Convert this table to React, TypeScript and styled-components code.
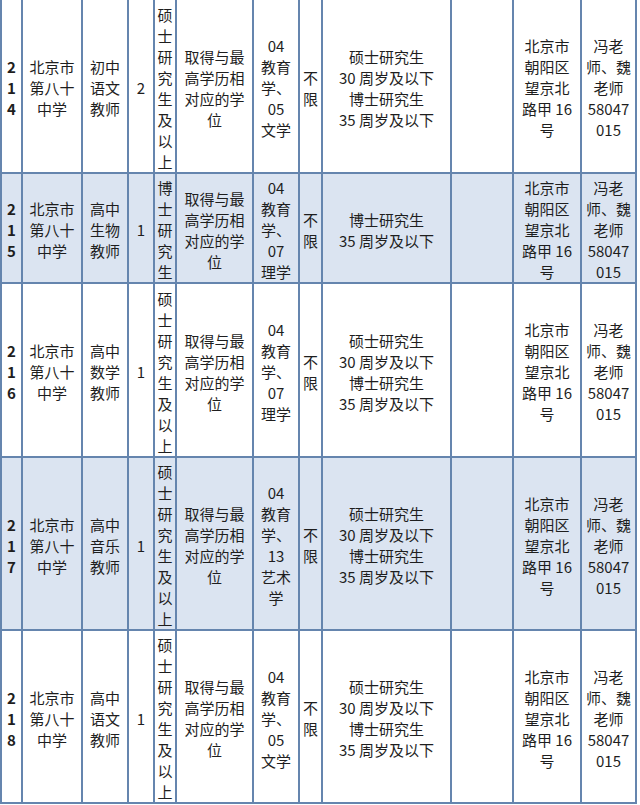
import React from "react";
import styled, { createGlobalStyle } from "styled-components";

const Global = createGlobalStyle`
  html, body { margin: 0; padding: 0; background: #ffffff; }
  body { width: 640px; height: 805px; overflow: hidden; }
`;

const LINE = "#6585ae";
const SHADE = "#dbe4f1";

const Table = styled.table`
  border-collapse: separate;
  border-spacing: 0;
  table-layout: fixed;
  width: 637px;
  border-left: 2px solid ${LINE};
  font-family: "Noto Sans CJK SC", "Noto Sans", sans-serif;
  font-size: 15px;
  line-height: 21px;
  color: #1e1e1e;
`;

const Row = styled.tr<{ $shade: boolean; $h: number }>`
  height: ${(p) => p.$h}px;
  background: ${(p) => (p.$shade ? SHADE : "#ffffff")};
`;

const Cell = styled.td<{ $bold?: boolean }>`
  box-sizing: border-box;
  padding: 3px 0 0 0;
  border-right: 2px solid ${LINE};
  border-bottom: 2px solid ${LINE};
  text-align: center;
  vertical-align: middle;
  white-space: nowrap;
  overflow: hidden;
  font-weight: ${(p) => (p.$bold ? 700 : 400)};
`;

const Line = styled.span`
  display: block;
`;

const widths = [21, 60, 46, 26, 22, 77, 46, 23, 129, 62, 68, 55];

type RowData = {
  id: string;
  shade: boolean;
  h: number;
  post: string[];
  count: string;
  degree: string;
  major: string[];
  age: string[];
};

const masterAge = ["硕士研究生", "30 周岁及以下", "博士研究生", "35 周岁及以下"];

const rows: RowData[] = [
  { id: "214", shade: false, h: 174, post: ["初中", "语文", "教师"], count: "2", degree: "硕士研究生及以上", major: ["04", "教育", "学、", "05", "文学"], age: masterAge },
  { id: "215", shade: true, h: 109, post: ["高中", "生物", "教师"], count: "1", degree: "博士研究生", major: ["04", "教育", "学、", "07", "理学"], age: ["博士研究生", "35 周岁及以下"] },
  { id: "216", shade: false, h: 174, post: ["高中", "数学", "教师"], count: "1", degree: "硕士研究生及以上", major: ["04", "教育", "学、", "07", "理学"], age: masterAge },
  { id: "217", shade: true, h: 173, post: ["高中", "音乐", "教师"], count: "1", degree: "硕士研究生及以上", major: ["04", "教育", "学、", "13", "艺术", "学"], age: masterAge },
  { id: "218", shade: false, h: 173, post: ["高中", "语文", "教师"], count: "1", degree: "硕士研究生及以上", major: ["04", "教育", "学、", "05", "文学"], age: masterAge },
];

const Lines = ({ items }: { items: string[] }) => (
  <>
    {items.map((t, i) => (
      <Line key={i}>{t}</Line>
    ))}
  </>
);

export default function App() {
  return (
    <>
      <Global />
      <Table>
        <colgroup>
          {widths.map((w, i) => (
            <col key={i} style={{ width: w }} />
          ))}
        </colgroup>
        <tbody>
          {rows.map((r) => (
            <Row key={r.id} $shade={r.shade} $h={r.h}>
              <Cell $bold>
                <Lines items={r.id.split("")} />
              </Cell>
              <Cell>
                <Lines items={["北京市", "第八十", "中学"]} />
              </Cell>
              <Cell>
                <Lines items={r.post} />
              </Cell>
              <Cell>{r.count}</Cell>
              <Cell>
                <Lines items={r.degree.split("")} />
              </Cell>
              <Cell>
                <Lines items={["取得与最", "高学历相", "对应的学", "位"]} />
              </Cell>
              <Cell>
                <Lines items={r.major} />
              </Cell>
              <Cell>
                <Lines items={["不", "限"]} />
              </Cell>
              <Cell>
                <Lines items={r.age} />
              </Cell>
              <Cell />
              <Cell>
                <Lines items={["北京市", "朝阳区", "望京北", "路甲 16", "号"]} />
              </Cell>
              <Cell>
                <Lines items={["冯老", "师、魏", "老师", "58047", "015"]} />
              </Cell>
            </Row>
          ))}
        </tbody>
      </Table>
    </>
  );
}
